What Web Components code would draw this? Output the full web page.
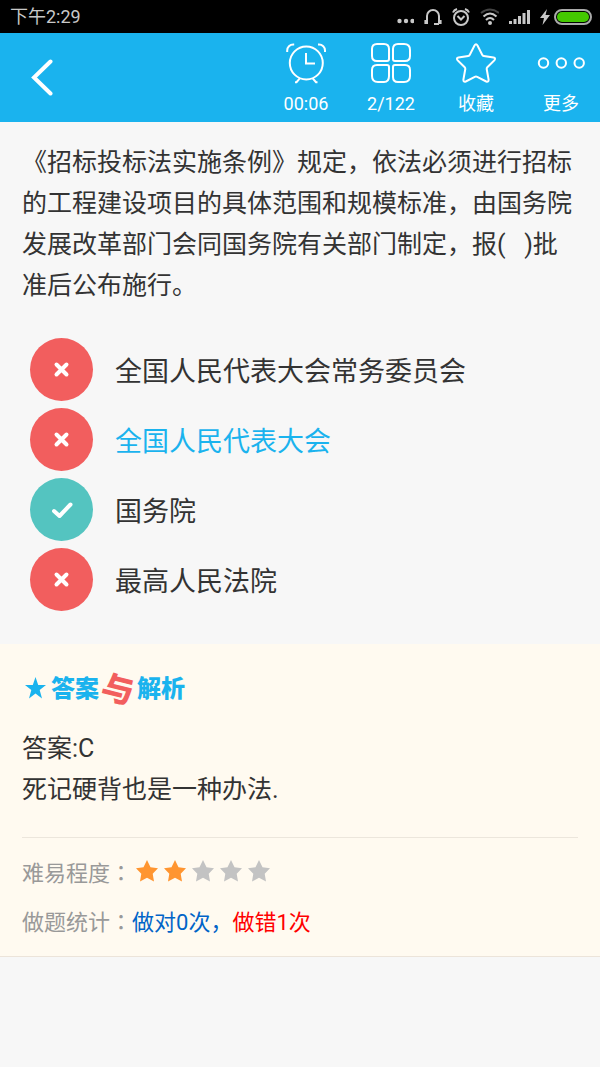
<!DOCTYPE html>
<html lang="zh-CN">
<head>
<meta charset="utf-8">
<meta name="viewport" content="width=device-width, initial-scale=1">
<title>答案与解析</title>
<style>
    body {
        margin: 0;
        min-height: 100vh;
        background-color: #f7f7f7;
        color: #333;
        font-family: Roboto, "Noto Sans CJK SC", sans-serif;
    }
</style>
</head>
<body>
<status-bar>下午2:29</status-bar>
<app-header>
    <tool-button icon="clock">00:06</tool-button>
    <tool-button icon="grid">2/122</tool-button>
    <tool-button icon="star">收藏</tool-button>
    <tool-button icon="more">更多</tool-button>
</app-header>
<question-card>
    <span slot="title">《招标投标法实施条例》规定，依法必须进行招标的工程建设项目的具体范围和规模标准，由国务院发展改革部门会同国务院有关部门制定，报(&nbsp;&nbsp; )批准后公布施行。</span>
    <answer-option result="wrong">全国人民代表大会常务委员会</answer-option>
    <answer-option result="wrong" chosen>全国人民代表大会</answer-option>
    <answer-option result="right">国务院</answer-option>
    <answer-option result="wrong">最高人民法院</answer-option>
</question-card>
<answer-panel>
    <div>答案:C</div>
    <div>死记硬背也是一种办法.</div>
    <star-rating slot="level" value="2"></star-rating>
    <span slot="right">做对0次</span>
    <span slot="wrong">做错1次</span>
</answer-panel>

<script>
const statusBar = document.createElement('template');

statusBar.innerHTML = `
    <style>
        :host {
            display: flex;
            align-items: center;
            justify-content: space-between;
            height: 33px;
            padding: 0 8px 0 10px;
            background-color: #000;
            color: #c8c8c8;
            font-size: 18px;
            line-height: 33px;
        }
        .icons, .power {
            display: flex;
            align-items: center;
            gap: 10px;
        }
        .power {
            gap: 4px;
        }
        svg {
            display: block;
            fill: none;
            stroke: #c8c8c8;
            stroke-width: 2;
        }
        .solid {
            fill: #c8c8c8;
            stroke: none;
        }
    </style>
    <span><slot></slot></span>
    <div class="icons">
        <svg class="solid" width="17" height="18"><circle cx="2.500" cy="13" r="2.200"/><circle cx="9" cy="13" r="2.200"/><circle cx="15.500" cy="13" r="2.200"/></svg>
        <svg width="18" height="18"><path d="M3 12V8a6 6 0 0 1 12 0v4M3 11v5M1.400 12v4M15 11v5M16.600 12v4M15 16h-5"/></svg>
        <svg width="18" height="18"><circle cx="9" cy="10" r="7"/><path d="M5.500 8L9 11.500 12.500 8M1 4.500Q2 2 5 1M17 4.500Q16 2 13 1"/></svg>
        <svg width="19" height="18"><path stroke="#444" d="M1 5Q10-2 19 5"/><path d="M3.500 8.500Q10 2.500 16.500 8.500M6 12q4-4 8 0"/><circle class="solid" cx="10" cy="15" r="2"/></svg>
        <svg class="solid" width="21" height="18"><path d="M0 13h3v3H0zM4.500 11h3v5h-3zM9 8h3v8H9zM13.500 5h3v11h-3zM18 2h3v14h-3z"/></svg>
        <div class="power">
            <svg class="solid" width="10" height="18"><path d="M7 1L0 10h4l-1.500 7L10 7H5.500z"/></svg>
            <svg width="38" height="18"><rect x="1" y="2" width="36" height="14" rx="7" stroke="#aaa"/><rect x="3" y="4" width="32" height="10" rx="5" fill="#44c800" stroke="none"/></svg>
        </div>
    </div>
`;

class StatusBar extends HTMLElement {
    constructor() {
        super();
        this._shadowRoot = this.attachShadow({mode:'open'});
        this._shadowRoot.appendChild(statusBar.content.cloneNode(true));
    }
}

window.customElements.define('status-bar', StatusBar);


const appHeader = document.createElement('template');

appHeader.innerHTML = `
    <style>
        :host {
            display: flex;
            align-items: center;
            justify-content: space-between;
            height: 89px;
            background-color: #1ab3ee;
            color: #fff;
        }
        .back {
            padding: 20px 30px;
            border: 0;
            background: none;
        }
        svg {
            display: block;
        }
        nav {
            display: flex;
            gap: 7px;
            padding-top: 2px;
        }
    </style>
    <button class="back" aria-label="返回">
        <svg width="24" height="38" fill="none" stroke="#fff" stroke-width="4" stroke-linecap="round"><path d="M20.500 2.500L4 18.500l16.500 16"/></svg>
    </button>
    <nav><slot></slot></nav>
`;

class AppHeader extends HTMLElement {
    constructor() {
        super();
        this._shadowRoot = this.attachShadow({mode:'open'});
        this._shadowRoot.appendChild(appHeader.content.cloneNode(true));
    }
}

window.customElements.define('app-header', AppHeader);


const toolIcons = {
    clock: '<circle cx="20.300" cy="20" r="16.500"/><path d="M20 10v10.500h9M1.200 9V7.500a6 6 0 0 1 6-6h1M39 9V7.500a6 6 0 0 0-6-6h-1M9 39.200h1.500l3.500-4M31.500 39.200H30l-3.500-4"/>',
    grid: '<path d="M7 1h6q5 0 5 5v10q0 2-2 2H6q-5 0-5-5V6q0-5 5-5zM27 1h6q6 0 6 6v6q0 5-5 5H24q-2 0-2-2V6q0-5 5-5zM6 22h10q2 0 2 2v9q0 6-5 6H7q-6 0-6-6v-6q0-5 5-5zM24 22h10q5 0 5 5v6q0 6-6 6h-6q-5 0-5-5V24q0-2 2-2z"/>',
    star: '<path d="M18.500 2.500q1.500-2.500 3 0l4.700 9.200q.5 1 1.600 1.200l9.700 1.600q2.500.6 1 2.600l-7.200 7.200q-.7.700-.6 1.700l1.900 10.700q.1 2.600-2.400 1.800l-9-4.600q-1.200-.6-2.400 0l-9 4.600q-2.500.8-2.400-1.800L9.300 26q.1-1-.6-1.700L1.500 17.100q-1.500-2 1-2.600l9.700-1.600q1.100-.2 1.600-1.200z"/>',
    more: '<circle cx="2.500" cy="20" r="4.700"/><circle cx="20.300" cy="20" r="4.700"/><circle cx="38.200" cy="20" r="4.700"/>'
};

const toolButton = document.createElement('template');

toolButton.innerHTML = `
    <style>
        button {
            display: flex;
            flex-direction: column;
            align-items: center;
            gap: 11px;
            width: 78px;
            padding: 0;
            border: 0;
            background: none;
            color: inherit;
            font: inherit;
            font-size: 18px;
            line-height: 20px;
        }
        svg {
            overflow: visible;
            fill: none;
            stroke: #fff;
            stroke-width: 2;
        }
    </style>
    <button>
        <svg width="40" height="40"></svg>
        <span><slot></slot></span>
    </button>
`;

class ToolButton extends HTMLElement {
    constructor() {
        super();
        this._shadowRoot = this.attachShadow({mode:'open'});
        this._shadowRoot.appendChild(toolButton.content.cloneNode(true));
    }

    connectedCallback() {
        this._shadowRoot.querySelector('svg').innerHTML = toolIcons[this.getAttribute('icon')];
    }
}

window.customElements.define('tool-button', ToolButton);


const questionCard = document.createElement('template');

questionCard.innerHTML = `
    <style>
        :host {
            display: block;
            padding: 20px 22px 30px;
        }
        p {
            margin: 0 0 28px;
            font-size: 25px;
            line-height: 41px;
        }
    </style>
    <p><slot name="title"></slot></p>
    <div><slot></slot></div>
`;

class QuestionCard extends HTMLElement {
    constructor() {
        super();
        this._shadowRoot = this.attachShadow({mode:'open'});
        this._shadowRoot.appendChild(questionCard.content.cloneNode(true));
    }
}

window.customElements.define('question-card', QuestionCard);


const answerOption = document.createElement('template');

answerOption.innerHTML = `
    <style>
        :host {
            display: block;
        }
        button {
            display: flex;
            align-items: center;
            gap: 22px;
            width: 100%;
            height: 70px;
            padding: 0 8px;
            border: 0;
            background: none;
            color: inherit;
            font: inherit;
            font-size: 27px;
            text-align: left;
        }
        svg {
            flex: none;
            border-radius: 50%;
            background-color: #f25e5e;
            fill: none;
            stroke: #fff;
            stroke-width: 4;
            stroke-linecap: round;
            stroke-linejoin: round;
        }
        :host([result="right"]) svg {
            background-color: #54c4c0;
        }
        :host([chosen]) {
            color: #1ab3ee;
        }
    </style>
    <button>
        <svg width="63" height="63"><path/></svg>
        <span><slot></slot></span>
    </button>
`;

class AnswerOption extends HTMLElement {
    constructor() {
        super();
        this._shadowRoot = this.attachShadow({mode:'open'});
        this._shadowRoot.appendChild(answerOption.content.cloneNode(true));
    }

    connectedCallback() {
        const right = this.getAttribute('result') === 'right';
        const mark = right ? 'M24 33l5.500 5L40.500 26.500' : 'M26.500 26.500l10 10M36.500 26.500l-10 10';
        this._shadowRoot.querySelector('path').setAttribute('d', mark);
    }
}

window.customElements.define('answer-option', AnswerOption);


class StarRating extends HTMLElement {
    constructor() {
        super();
        this._shadowRoot = this.attachShadow({mode:'open'});
    }

    connectedCallback() {
        const value = Number(this.getAttribute('value'));
        let stars = '';
        for (let i = 0; i < 5; i++) {
            stars += `<svg width="22" height="22" fill="${i < value ? '#ff9530' : '#c3c3c3'}"><path d="M11 0l3.500 7.300 7.500 1-5.300 5.400 1.300 7.800-7-3.700-7 3.700 1.300-7.800L0 8.300l7.500-1z"/></svg>`;
        }
        this._shadowRoot.innerHTML = `
            <style>
                :host {
                    display: flex;
                    gap: 6px;
                    padding-left: 4px;
                }
            </style>
            ${stars}
        `;
    }
}

window.customElements.define('star-rating', StarRating);


const answerPanel = document.createElement('template');

answerPanel.innerHTML = `
    <style>
        :host {
            display: block;
            padding: 24px 22px 12px;
            border-bottom: 1px solid #ece4da;
            background-color: #fffaf0;
        }
        h2 {
            display: flex;
            align-items: center;
            gap: 3px;
            height: 40px;
            margin: 0 0 20px;
            padding-left: 3px;
            color: #1ab3ee;
            font-size: 24px;
            font-weight: 900;
        }
        h2 svg {
            margin-right: 2px;
        }
        h2 span {
            padding-bottom: 3px;
        }
        .and {
            color: #f25e5e;
            font-size: 32px;
            transform: rotate(14deg);
        }
        .text {
            padding-bottom: 27px;
            border-bottom: 1px solid #ece6dc;
            font-size: 25px;
            line-height: 41px;
        }
        .row {
            display: flex;
            align-items: center;
            height: 49px;
            color: #999;
            font-size: 22px;
        }
        .text + .row {
            margin-top: 8px;
        }
        /* the traditional font centres the colon in its square */
        .colon {
            font-family: "Noto Sans CJK TC", sans-serif;
        }
        .right {
            color: #0064c8;
        }
        .wrong {
            color: #f00;
        }
    </style>
    <h2>
        <svg width="21" height="22" fill="#1ab3ee"><path d="M10.500 0l2.700 8H21l-6.300 5 2.300 8.500-6.500-5-6.500 5L6.300 13 0 8h7.800z"/></svg>
        <span>答案</span><span class="and">与</span><span>解析</span>
    </h2>
    <div class="text"><slot></slot></div>
    <div class="row"><span>难易程度<span class="colon" lang="zh-TW">：</span></span><slot name="level"></slot></div>
    <div class="row">
        <span>做题统计<span class="colon" lang="zh-TW">：</span></span>
        <span class="right"><slot name="right"></slot>，</span>
        <span class="wrong"><slot name="wrong"></slot></span>
    </div>
`;

class AnswerPanel extends HTMLElement {
    constructor() {
        super();
        this._shadowRoot = this.attachShadow({mode:'open'});
        this._shadowRoot.appendChild(answerPanel.content.cloneNode(true));
    }
}

window.customElements.define('answer-panel', AnswerPanel);
</script>
</body>
</html>
